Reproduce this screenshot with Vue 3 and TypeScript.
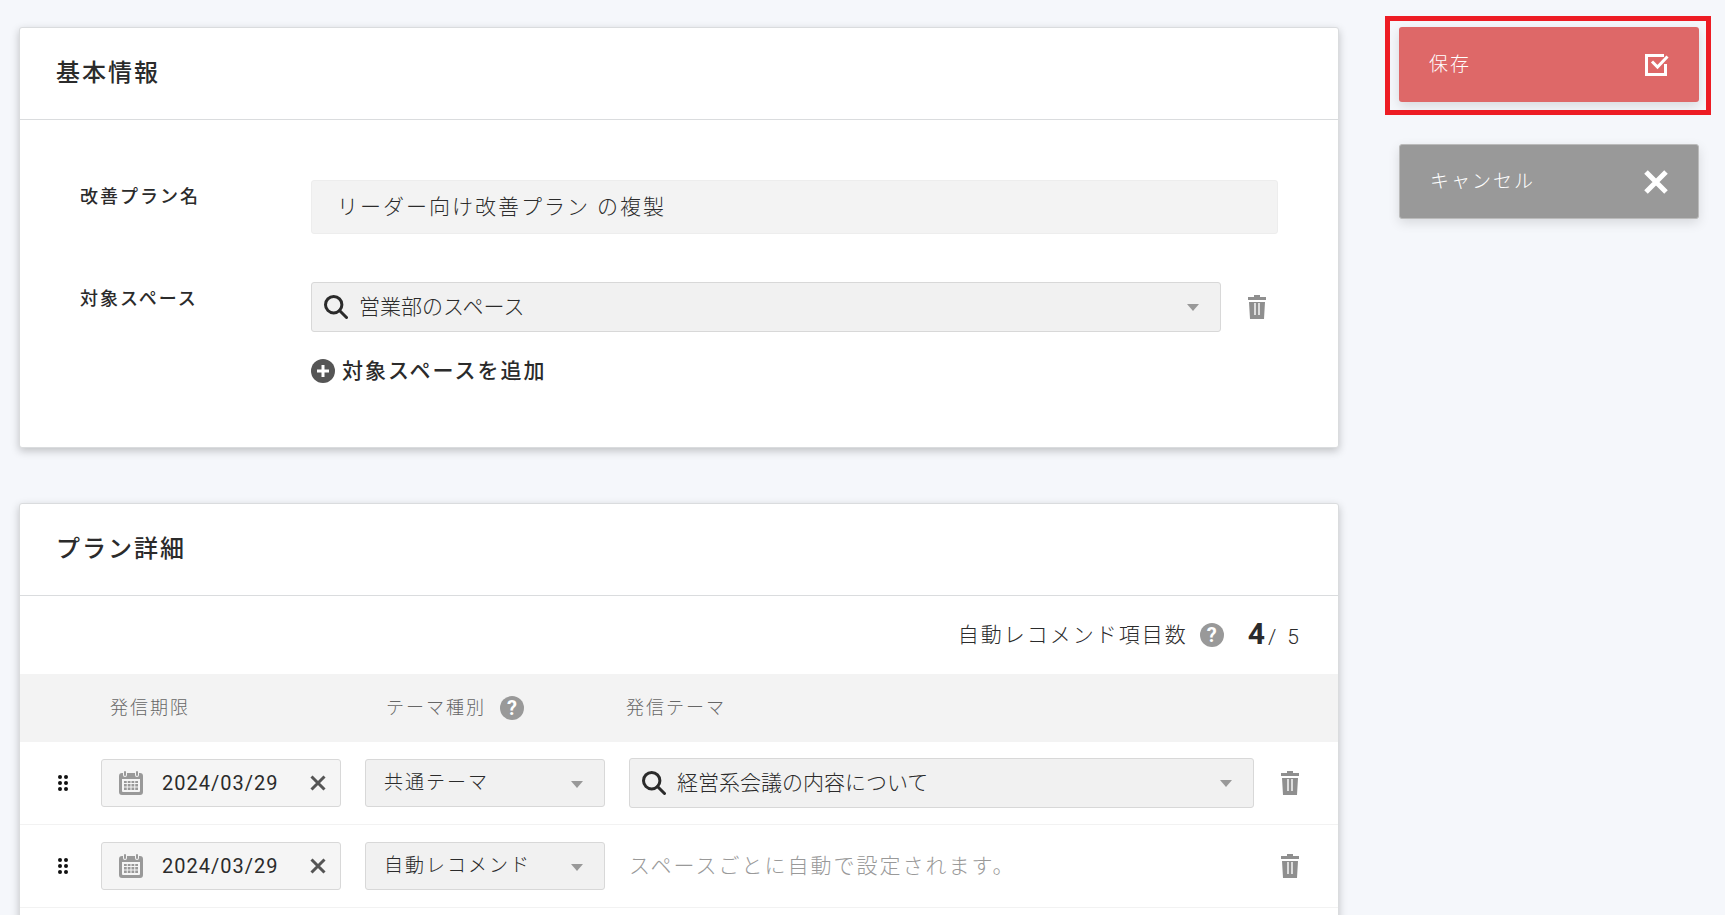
<script setup lang="ts">
import { ref } from 'vue'

interface PlanRow {
  id: number
  date: string
  kind: string
  theme: string | null
}

const planName = ref('リーダー向け改善プラン の複製')
const space = ref('営業部のスペース')
const kinds = ['共通テーマ', '自動レコメンド']
const rows = ref<PlanRow[]>([
  { id: 1, date: '2024/03/29', kind: '共通テーマ', theme: '経営系会議の内容について' },
  { id: 2, date: '2024/03/29', kind: '自動レコメンド', theme: null },
])
</script>

<template>
  <div class="page">
    <main class="main">
      <section class="panel">
        <h2 class="panel-title">基本情報</h2>
        <div class="form">
          <label class="label" for="plan-name">改善プラン名</label>
          <input id="plan-name" v-model="planName" class="text-input" type="text" />
          <label class="label" for="space">対象スペース</label>
          <div class="space-field">
            <div class="space-line">
              <div class="combo">
                <svg class="search" viewBox="0 0 24 24" aria-hidden="true"><circle cx="9.7" cy="9.7" r="8.2" /><path d="M15.5 15.5L22.5 22.5" /></svg>
                <input id="space" v-model="space" type="text" />
                <span class="caret"></span>
              </div>
              <button class="icon-button" type="button" aria-label="削除">
                <svg class="trash" viewBox="0 0 20 24" aria-hidden="true"><path d="M7 0h6v2h6v3H1V2h6zM2 7h16l-1 17H3z" /><path class="slot" d="M7 8h2v12H7zM11 8h2v12h-2z" /></svg>
              </button>
            </div>
            <button class="add" type="button">
              <svg viewBox="0 0 24 24" aria-hidden="true"><circle cx="12" cy="12" r="12" /><path d="M12 6v12M6 12h12" /></svg>
              対象スペースを追加
            </button>
          </div>
        </div>
      </section>

      <section class="panel details">
        <h2 class="panel-title">プラン詳細</h2>
        <div class="counter">
          <span>自動レコメンド項目数</span>
          <button class="help" type="button" aria-label="ヘルプ">?</button>
          <span class="count"><strong>4</strong>/ 5</span>
        </div>
        <table>
          <colgroup>
            <col class="c-handle" /><col class="c-box" /><col class="c-box" /><col /><col class="c-trash" />
          </colgroup>
          <thead>
            <tr>
              <td></td>
              <th class="th-date" scope="col">発信期限</th>
              <th class="th-kind" scope="col"><span class="th-line">テーマ種別<button class="help" type="button" aria-label="ヘルプ">?</button></span></th>
              <th scope="col">発信テーマ</th>
              <td></td>
            </tr>
          </thead>
          <tbody>
            <tr v-for="row in rows" :key="row.id">
              <td>
                <svg class="handle" viewBox="0 0 12 18" aria-hidden="true">
                  <circle cx="3" cy="3" r="2" /><circle cx="9" cy="3" r="2" />
                  <circle cx="3" cy="9" r="2" /><circle cx="9" cy="9" r="2" />
                  <circle cx="3" cy="15" r="2" /><circle cx="9" cy="15" r="2" />
                </svg>
              </td>
              <td>
                <div class="date">
                  <svg class="calendar" viewBox="0 0 24 24" aria-hidden="true">
                    <path fill-rule="evenodd" d="M3 2h1v2a2 2 0 0 0 4 0V2h8v2a2 2 0 0 0 4 0V2h1a3 3 0 0 1 3 3v16a3 3 0 0 1-3 3H3a3 3 0 0 1-3-3V5a3 3 0 0 1 3-3zM3 8v12a1 1 0 0 0 1 1h16a1 1 0 0 0 1-1V8z" />
                    <rect x="5" y="0" width="2" height="5" rx="1" /><rect x="17" y="0" width="2" height="5" rx="1" />
                    <path d="M5 10h14v9H5z" />
                    <path class="grid" d="M5 12.5h14M5 16h14M8.25 10v9M12 10v9M15.75 10v9" />
                  </svg>
                  <input v-model="row.date" type="text" aria-label="発信期限" />
                  <button class="clear" type="button" aria-label="クリア">
                    <svg viewBox="0 0 16 16" aria-hidden="true"><path d="M1.5 1.5l13 13M14.5 1.5l-13 13" /></svg>
                  </button>
                </div>
              </td>
              <td>
                <div class="select">
                  <select v-model="row.kind" aria-label="テーマ種別">
                    <option v-for="kind in kinds" :key="kind">{{ kind }}</option>
                  </select>
                  <span class="caret"></span>
                </div>
              </td>
              <td>
                <div v-if="row.theme !== null" class="combo">
                  <svg class="search" viewBox="0 0 24 24" aria-hidden="true"><circle cx="9.7" cy="9.7" r="8.2" /><path d="M15.5 15.5L22.5 22.5" /></svg>
                  <input v-model="row.theme" type="text" aria-label="発信テーマ" />
                  <span class="caret"></span>
                </div>
                <span v-else class="auto">スペースごとに自動で設定されます。</span>
              </td>
              <td>
                <button class="icon-button" type="button" aria-label="削除">
                  <svg class="trash" viewBox="0 0 20 24" aria-hidden="true"><path d="M7 0h6v2h6v3H1V2h6zM2 7h16l-1 17H3z" /><path class="slot" d="M7 8h2v12H7zM11 8h2v12h-2z" /></svg>
                </button>
              </td>
            </tr>
          </tbody>
        </table>
      </section>
    </main>

    <aside class="actions">
      <div class="highlight">
        <button class="action save" type="button">
          保存
          <svg viewBox="0 0 24 24" aria-hidden="true"><path class="box" d="M19 2.5H1.5v19h19V11" /><path class="tick" d="M7 8.5l5.5 5.5L22.5 3.5" /></svg>
        </button>
      </div>
      <button class="action cancel" type="button">
        キャンセル
        <svg viewBox="0 0 24 24" aria-hidden="true"><path class="cross" d="M2 2l20 20M22 2L2 22" /></svg>
      </button>
    </aside>
  </div>
</template>

<style>
body {
  background: #f5f7fb;
}
</style>

<style scoped>
.page {
  display: grid;
  grid-template-columns: minmax(0, 1fr) 300px;
  gap: 60px;
  height: 100vh;
  padding: 27px 26px 0 19px;
  box-sizing: border-box;
  overflow: hidden;
  color: #2b2b2b;
  font: 300 21px/32px Roboto, "Noto Sans CJK JP", sans-serif;
  letter-spacing: 2px;
}

.page * {
  box-sizing: border-box;
}

button,
input,
select {
  margin: 0;
  padding: 0;
  border: 0;
  background: none;
  color: inherit;
  font: inherit;
  letter-spacing: inherit;
  outline: none;
}

button {
  cursor: pointer;
}

.main {
  display: flex;
  flex-direction: column;
  gap: 55px;
}

.panel {
  flex: none;
  border: 1px solid #dadcde;
  border-radius: 3px;
  background: #fff;
  box-shadow: 0 3px 8px rgba(0, 0, 0, 0.22);
}

.panel-title {
  margin: 0;
  padding: 29px 36px 30px;
  border-bottom: 1px solid #dadcde;
  font-size: 24px;
  font-weight: 500;
}

.form {
  display: grid;
  grid-template-columns: 231px minmax(0, 1fr);
  row-gap: 48px;
  padding: 60px;
}

.label {
  padding-top: 1px;
  font-size: 18px;
  font-weight: 500;
}

.text-input {
  width: 100%;
  height: 54px;
  padding: 0 25px 4px;
  border: 1px solid #ededed;
  border-radius: 3px;
  background: #f3f3f3;
}

.space-line {
  display: grid;
  grid-template-columns: minmax(0, 1fr) 20px;
  gap: 26px;
  padding-right: 11px;
}

.combo {
  display: flex;
  align-items: center;
  height: 50px;
  padding: 0 21px 0 12px;
  border: 1px solid #d8d8d8;
  border-radius: 3px;
  background: #f1f1f1;
}

.combo input {
  flex: 1;
  min-width: 0;
  padding-left: 11px;
  letter-spacing: 0;
}

.search {
  width: 24px;
  height: 24px;
  fill: none;
  stroke: #2b2b2b;
  stroke-width: 3;
}

.search path {
  stroke-linecap: round;
}

.caret {
  border: 6px solid transparent;
  border-top: 7px solid #999;
  border-bottom: 0;
  pointer-events: none;
}

.icon-button {
  display: flex;
  align-items: center;
}

.trash {
  width: 20px;
  height: 24px;
  fill: #8f8f8f;
}

.trash .slot {
  fill: #ddd;
}

.add {
  display: flex;
  align-items: center;
  gap: 7px;
  margin-top: 23px;
  font-weight: 500;
}

.add svg {
  width: 24px;
  height: 24px;
  fill: #555;
}

.add path {
  stroke: #fff;
  stroke-width: 3;
}

.details {
  padding-bottom: 60px;
}

.counter {
  display: flex;
  align-items: center;
  justify-content: flex-end;
  height: 78px;
  padding-right: 36px;
}

.counter .help {
  margin: 0 24px 0 12px;
}

.count {
  letter-spacing: 3px;
}

.counter strong {
  font-size: 30px;
  font-weight: 700;
}

.help {
  width: 24px;
  height: 24px;
  border-radius: 50%;
  background: #999;
  color: #fff;
  font-size: 20px;
  font-weight: 700;
  line-height: 24px;
  letter-spacing: 0;
  text-align: center;
}

table {
  width: 100%;
  border-collapse: separate;
  border-spacing: 0;
  table-layout: fixed;
}

.c-handle {
  width: 81px;
}

.c-box {
  width: 264px;
}

.c-trash {
  width: 84px;
}

td,
th {
  padding: 0;
  text-align: left;
}

thead tr {
  height: 68px;
  background: #f3f3f3;
}

th {
  color: #666;
  font-size: 18px;
  font-weight: 300;
}

.th-date {
  padding-left: 9px;
}

.th-kind {
  padding-left: 21px;
}

.th-line {
  display: flex;
  align-items: center;
  gap: 14px;
}

th:nth-child(4) {
  text-indent: -3px;
}

tbody td {
  height: 83px;
  border-bottom: 1px solid #f2f2f2;
}

.handle {
  display: block;
  width: 12px;
  height: 18px;
  margin-left: 37px;
  fill: #111;
}

.date,
.select {
  display: flex;
  align-items: center;
  width: 240px;
  height: 48px;
  border: 1px solid #d8d8d8;
  border-radius: 3px;
  background: #f5f5f5;
}

.date {
  padding: 0 14px 0 17px;
}

.date input {
  flex: 1;
  min-width: 0;
  padding-left: 19px;
  font-size: 20px;
  font-weight: 400;
  letter-spacing: 1px;
}

.calendar {
  width: 24px;
  height: 24px;
  fill: #999;
}

.calendar .grid {
  stroke: #f5f5f5;
  stroke-width: 1;
}

.clear {
  display: flex;
}

.clear svg {
  width: 16px;
  height: 16px;
  stroke: #555;
  stroke-width: 3;
}

.select {
  position: relative;
  background: #f1f1f1;
}

.select select {
  width: 100%;
  height: 100%;
  padding-left: 18px;
  appearance: none;
  font-size: 19px;
}

.select .caret {
  position: absolute;
  right: 21px;
  top: 21px;
}

.auto {
  color: #999;
}

td .icon-button {
  margin-left: 26px;
}

.actions {
  display: flex;
  flex-direction: column;
  gap: 42px;
}

.highlight {
  position: relative;
}

.highlight::after {
  content: "";
  position: absolute;
  inset: -11px -12px -13px -14px;
  border: 5px solid #ed1c24;
  pointer-events: none;
}

.action {
  display: flex;
  align-items: center;
  justify-content: space-between;
  width: 100%;
  height: 75px;
  padding: 0 30px;
  border-radius: 3px;
  box-shadow: 0 4px 12px rgba(0, 0, 0, 0.12);
  color: #fff;
  font-size: 19px;
}

.action svg {
  width: 24px;
  height: 24px;
  fill: none;
  stroke: #fff;
}

.save {
  background: #de6868;
}

.cancel {
  border: 1px solid #bbb;
  background: #999;
}

.box,
.tick {
  stroke-width: 3;
}

.cross {
  stroke-width: 5;
}
</style>
